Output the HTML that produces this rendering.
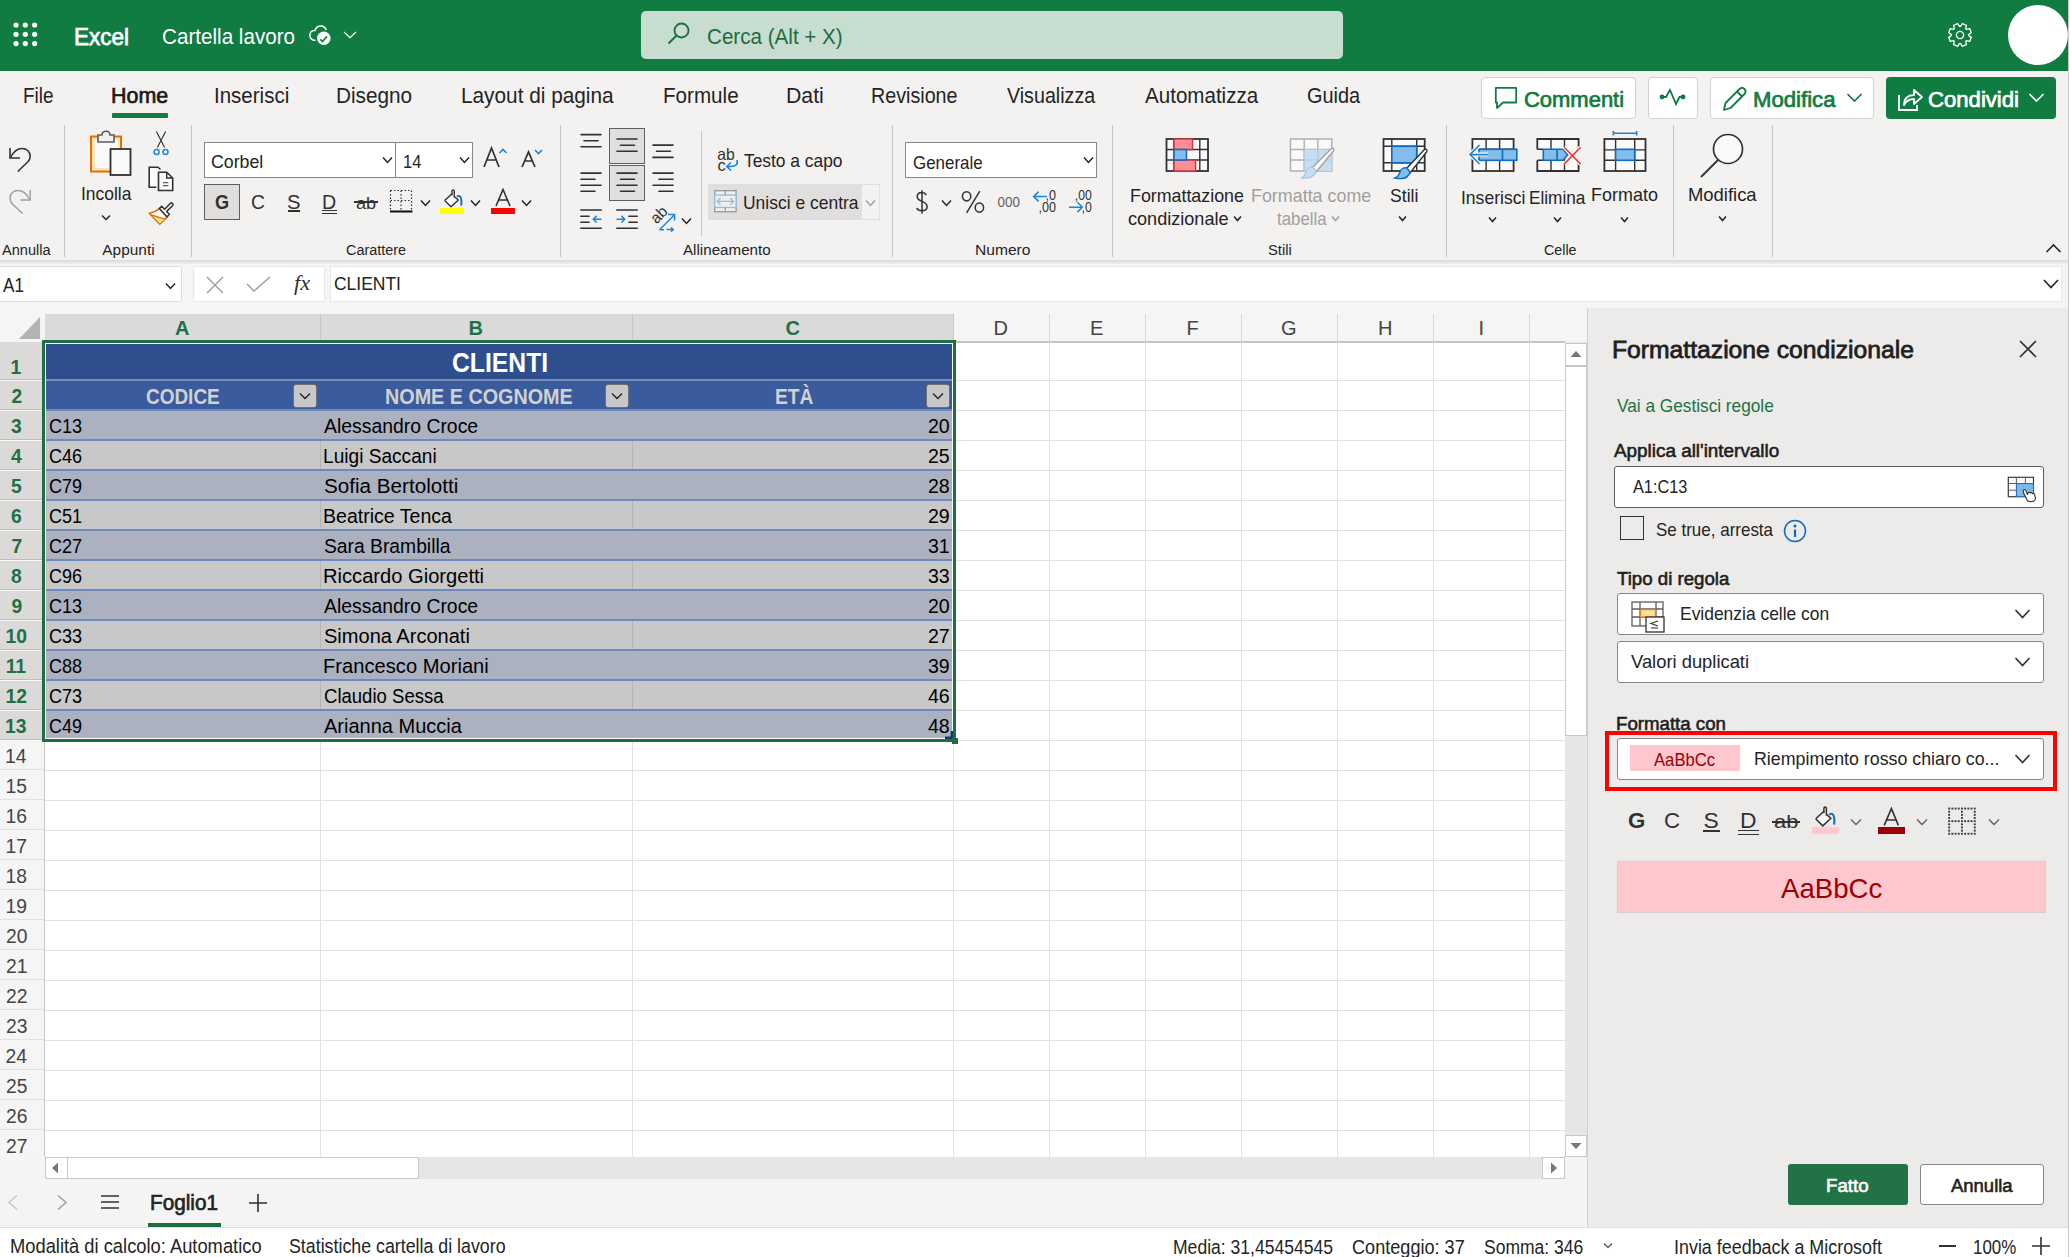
<!DOCTYPE html><html><head><meta charset="utf-8"><style>
html,body{margin:0;padding:0;width:2070px;height:1257px;overflow:hidden;background:#fff;position:relative}
body>div,body>svg,body>span{position:absolute;display:block}
.t{white-space:nowrap;line-height:1;font-family:"Liberation Sans",sans-serif;transform-origin:0 0}
</style></head><body>
<div style="left:0px;top:0px;width:2070px;height:71px;background:#107C41"></div>
<svg style="left:13px;top:22px;" width="26" height="26" viewBox="0 0 26 26"><circle cx="3.0" cy="3.0" r="2.6" fill="#fff"/><circle cx="3.0" cy="12.3" r="2.6" fill="#fff"/><circle cx="3.0" cy="21.6" r="2.6" fill="#fff"/><circle cx="12.3" cy="3.0" r="2.6" fill="#fff"/><circle cx="12.3" cy="12.3" r="2.6" fill="#fff"/><circle cx="12.3" cy="21.6" r="2.6" fill="#fff"/><circle cx="21.6" cy="3.0" r="2.6" fill="#fff"/><circle cx="21.6" cy="12.3" r="2.6" fill="#fff"/><circle cx="21.6" cy="21.6" r="2.6" fill="#fff"/></svg>
<span class="t" style="transform:scaleX(0.9624);left:74.0px;top:25.5px;font-size:23.43px;color:#fff;font-weight:400;-webkit-text-stroke:0.75px #fff;">Excel</span>
<span class="t" style="transform:scaleX(0.9444);left:162.1px;top:26.4px;font-size:21.86px;color:#fff;font-weight:400;">Cartella lavoro</span>
<svg style="left:305px;top:22px;" width="30" height="28" viewBox="0 0 30 28"><path d="M10.5 18.5 C6 18.5 4.6 15 4.9 12.6 C5.3 9.8 7.6 8.3 10 8.5 C11 5.4 13.3 4 15.8 4 C18.3 4 20.3 5.6 21.2 8" fill="none" stroke="#fff" stroke-width="1.5"/><circle cx="18.8" cy="16.3" r="6.7" fill="#fff"/><path d="M15.3 17.3 L17.5 19.6 L22 14.3" fill="none" stroke="#107C41" stroke-width="1.7"/></svg>
<svg style="left:343px;top:30px;" width="14" height="10" viewBox="0 0 14 10"><path d="M1 2 L7 7.7 L13 2" fill="none" stroke="#fff" stroke-width="1.2"/></svg>
<div style="left:641px;top:11px;width:702px;height:48px;background:#C6DDD0;border-radius:5px"></div>
<svg style="left:666px;top:21px;" width="26" height="26" viewBox="0 0 26 26"><circle cx="15.5" cy="9.5" r="7" fill="none" stroke="#1F6B42" stroke-width="1.8"/><path d="M10.5 14.5 L2.5 22.5" stroke="#1F6B42" stroke-width="2"/></svg>
<span class="t" style="transform:scaleX(0.9315);left:707.1px;top:25.5px;font-size:22.14px;color:#1F6B42;font-weight:400;">Cerca (Alt + X)</span>
<svg style="left:1947px;top:22px;" width="26" height="26" viewBox="0 0 26 26"><g transform="translate(13,13)"><polygon points="11.36,2.34 9.69,6.38 6.45,5.69 5.69,6.45 6.38,9.69 2.34,11.36 0.54,8.58 -0.54,8.58 -2.34,11.36 -6.38,9.69 -5.69,6.45 -6.45,5.69 -9.69,6.38 -11.36,2.34 -8.58,0.54 -8.58,-0.54 -11.36,-2.34 -9.69,-6.38 -6.45,-5.69 -5.69,-6.45 -6.38,-9.69 -2.34,-11.36 -0.54,-8.58 0.54,-8.58 2.34,-11.36 6.38,-9.69 5.69,-6.45 6.45,-5.69 9.69,-6.38 11.36,-2.34 8.58,-0.54 8.58,0.54" fill="none" stroke="#fff" stroke-width="1.3" stroke-linejoin="round"/><circle r="3.6" fill="none" stroke="#fff" stroke-width="1.4"/></g></svg>
<div style="left:2008px;top:5px;width:60px;height:60px;background:#fff;border-radius:50%"></div>
<div style="left:2068px;top:0px;width:2px;height:1257px;background:#fff"></div>
<div style="left:0px;top:71px;width:2068px;height:189px;background:#F3F2F1"></div>
<span class="t" style="transform:scaleX(0.8660);left:23.1px;top:85.4px;font-size:21.86px;color:#242424;font-weight:400;">File</span>
<span class="t" style="transform:scaleX(0.9798);left:111.0px;top:85.4px;font-size:21.86px;color:#1B1A19;font-weight:400;-webkit-text-stroke:0.70px #1B1A19;">Home</span>
<span class="t" style="transform:scaleX(0.9378);left:214.1px;top:85.4px;font-size:21.86px;color:#242424;font-weight:400;">Inserisci</span>
<span class="t" style="transform:scaleX(0.9488);left:336.1px;top:85.4px;font-size:21.86px;color:#242424;font-weight:400;">Disegno</span>
<span class="t" style="transform:scaleX(0.9509);left:460.6px;top:85.4px;font-size:21.86px;color:#242424;font-weight:400;">Layout di pagina</span>
<span class="t" style="transform:scaleX(0.9429);left:663.1px;top:85.4px;font-size:21.86px;color:#242424;font-weight:400;">Formule</span>
<span class="t" style="transform:scaleX(0.9725);left:786.0px;top:85.4px;font-size:21.86px;color:#242424;font-weight:400;">Dati</span>
<span class="t" style="transform:scaleX(0.9016);left:871.1px;top:85.4px;font-size:21.86px;color:#242424;font-weight:400;">Revisione</span>
<span class="t" style="transform:scaleX(0.8993);left:1006.6px;top:85.4px;font-size:21.86px;color:#242424;font-weight:400;">Visualizza</span>
<span class="t" style="transform:scaleX(0.9412);left:1145.0px;top:85.4px;font-size:21.86px;color:#242424;font-weight:400;">Automatizza</span>
<span class="t" style="transform:scaleX(0.9111);left:1307.1px;top:85.4px;font-size:21.86px;color:#242424;font-weight:400;">Guida</span>
<div style="left:112px;top:113px;width:56px;height:5px;background:#107C41;border-radius:1px"></div>
<div style="left:1481px;top:77px;width:155px;height:42px;background:#fff;border:1px solid #D1D1D1;border-radius:4px;box-sizing:border-box"></div>
<svg style="left:1493px;top:85px;" width="26" height="26" viewBox="0 0 26 26"><path d="M2.8 2.8 H23.2 V17.5 H10 L4 23 V17.5 H2.8 Z" fill="none" stroke="#107C41" stroke-width="1.8" stroke-linejoin="round"/></svg>
<span class="t" style="transform:scaleX(0.9674);left:1523.6px;top:88.4px;font-size:22.71px;color:#107C41;font-weight:400;-webkit-text-stroke:0.73px #107C41;">Commenti</span>
<div style="left:1648px;top:77px;width:50px;height:42px;background:#fff;border:1px solid #D1D1D1;border-radius:4px;box-sizing:border-box"></div>
<svg style="left:1659px;top:86px;" width="28" height="24" viewBox="0 0 28 24"><path d="M3 11 L7 11 L11 4 L17 18 L20.5 11 L25 11" fill="none" stroke="#107C41" stroke-width="1.8"/><circle cx="3" cy="11" r="2.4" fill="#107C41"/><circle cx="24" cy="11" r="2.4" fill="#107C41"/></svg>
<div style="left:1710px;top:77px;width:164px;height:42px;background:#fff;border:1px solid #D1D1D1;border-radius:4px;box-sizing:border-box"></div>
<svg style="left:1721px;top:85px;" width="28" height="28" viewBox="0 0 28 28"><path d="M3 25 L4.5 18 L18.5 4 C20 2.5 22 2.5 23.5 4 C25 5.5 25 7.5 23.5 9 L9.5 23 Z M16 6.5 L21 11.5" fill="none" stroke="#107C41" stroke-width="1.8" stroke-linejoin="round"/></svg>
<span class="t" style="transform:scaleX(0.9760);left:1753.4px;top:88.4px;font-size:22.71px;color:#107C41;font-weight:400;-webkit-text-stroke:0.73px #107C41;">Modifica</span>
<svg style="left:1846px;top:92px;" width="17" height="12" viewBox="0 0 17 12"><path d="M1.5 2 L8.5 9 L15.5 2" fill="none" stroke="#107C41" stroke-width="1.7"/></svg>
<div style="left:1886px;top:77px;width:170px;height:42px;background:#107C41;border-radius:4px"></div>
<svg style="left:1897px;top:86px;" width="27" height="26" viewBox="0 0 27 26"><path d="M2 9 V24 H20 V19" fill="none" stroke="#fff" stroke-width="1.8"/><path d="M7 19 C7 12 11 9 17 9 V4 L25 11 L17 18 V13 C12 13 9 15 7 19 Z" fill="none" stroke="#fff" stroke-width="1.8" stroke-linejoin="round"/></svg>
<span class="t" style="transform:scaleX(0.9744);left:1928.2px;top:88.4px;font-size:22.71px;color:#fff;font-weight:400;-webkit-text-stroke:0.73px #fff;">Condividi</span>
<svg style="left:2028px;top:92px;" width="17" height="12" viewBox="0 0 17 12"><path d="M1.5 2 L8.5 9 L15.5 2" fill="none" stroke="#fff" stroke-width="1.7"/></svg>
<div style="left:64px;top:125px;width:1px;height:132px;background:#C8C6C4"></div>
<div style="left:191px;top:125px;width:1px;height:132px;background:#C8C6C4"></div>
<div style="left:560px;top:125px;width:1px;height:132px;background:#C8C6C4"></div>
<div style="left:892px;top:125px;width:1px;height:132px;background:#C8C6C4"></div>
<div style="left:1112px;top:125px;width:1px;height:132px;background:#C8C6C4"></div>
<div style="left:1446px;top:125px;width:1px;height:132px;background:#C8C6C4"></div>
<div style="left:1673px;top:125px;width:1px;height:132px;background:#C8C6C4"></div>
<div style="left:1772px;top:125px;width:1px;height:132px;background:#C8C6C4"></div>
<div style="left:701px;top:131px;width:1px;height:105px;background:#C8C6C4"></div>
<span class="t" style="transform:scaleX(0.9466);left:2.3px;top:242.1px;font-size:15.43px;color:#242424;font-weight:400;">Annulla</span>
<span class="t" style="left:102.3px;top:242.1px;font-size:15.43px;color:#242424;font-weight:400;">Appunti</span>
<span class="t" style="transform:scaleX(0.9339);left:346.3px;top:242.1px;font-size:15.43px;color:#242424;font-weight:400;">Carattere</span>
<span class="t" style="transform:scaleX(0.9833);left:683.1px;top:242.1px;font-size:15.43px;color:#242424;font-weight:400;">Allineamento</span>
<span class="t" style="transform:scaleX(1.0118);left:975.1px;top:242.1px;font-size:15.43px;color:#242424;font-weight:400;">Numero</span>
<span class="t" style="transform:scaleX(0.9540);left:1267.7px;top:242.1px;font-size:15.43px;color:#242424;font-weight:400;">Stili</span>
<span class="t" style="transform:scaleX(0.9257);left:1544.0px;top:242.1px;font-size:15.43px;color:#242424;font-weight:400;">Celle</span>
<svg style="left:2045px;top:242px;" width="17" height="12" viewBox="0 0 17 12"><path d="M1.5 10 L8.5 3 L15.5 10" fill="none" stroke="#242424" stroke-width="1.6"/></svg>
<div style="left:0px;top:260px;width:2068px;height:4px;background:linear-gradient(#D9D8D7,#F0F0F0)"></div>
<svg style="left:8px;top:146px;" width="26" height="28" viewBox="0 0 26 28"><path d="M2 2 V12 H12" fill="none" stroke="#323130" stroke-width="1.6"/><path d="M2.5 11.5 C6 4.5 10.5 2.5 14.3 2.5 C18.8 2.5 22.2 6 22.2 10 C22.2 12.5 21.2 14.5 19.7 16 L9.7 25.5" fill="none" stroke="#323130" stroke-width="1.6"/></svg>
<svg style="left:8px;top:189px;" width="26" height="28" viewBox="0 0 26 28"><path d="M22.2 1 V11 H12.3" fill="none" stroke="#A19F9D" stroke-width="1.5"/><path d="M21.7 10.5 C18.2 3.5 13.7 1.5 9.9 1.5 C5.4 1.5 2 5 2 9 C2 11.5 3 13.5 4.5 15 L14.5 24.5" fill="none" stroke="#A19F9D" stroke-width="1.5"/></svg>
<svg style="left:88px;top:128px;" width="46" height="50" viewBox="0 0 46 50"><rect x="3" y="8.5" width="30" height="35" fill="#FCE4B8" stroke="#E07000" stroke-width="2"/><rect x="7" y="12" width="23" height="28" fill="#FAFAFA"/><path d="M10 14 V7 H14 C14 2 22 2 22 7 H26 V14 Z" fill="#F0F0F0" stroke="#605E5C" stroke-width="1.6"/><rect x="22.5" y="21" width="20" height="26" fill="#FAFAFA" stroke="#323130" stroke-width="1.8"/></svg>
<span class="t" style="transform:scaleX(0.9394);left:81.4px;top:185.2px;font-size:18.57px;color:#242424;font-weight:400;">Incolla</span>
<svg style="left:101px;top:214px;" width="10" height="8" viewBox="0 0 10 8"><path d="M1 1.5 L5 5.5 L9 1.5" fill="none" stroke="#242424" stroke-width="1.5"/></svg>
<svg style="left:151px;top:130px;" width="20" height="27" viewBox="0 0 20 27"><path d="M5.4 1.5 L13.6 17.6 M14.6 1.5 L6.4 17.6" stroke="#323130" stroke-width="1.15"/><circle cx="5.6" cy="22" r="2.5" fill="#fff" stroke="#1A86D9" stroke-width="1.5"/><circle cx="14.5" cy="22" r="2.5" fill="#fff" stroke="#1A86D9" stroke-width="1.5"/></svg>
<svg style="left:148px;top:165px;" width="27" height="28" viewBox="0 0 27 28"><path d="M8.3 22.2 H1.2 V2.2 H10 L12.5 4.5" fill="#FAFAFA" stroke="#323130" stroke-width="1.6"/><path d="M10.5 7.2 H18.7 L24.7 13 V25.5 H10.5 Z" fill="#FAFAFA" stroke="#323130" stroke-width="1.6" stroke-linejoin="miter"/><path d="M18.7 7.2 V13 H24.7" fill="none" stroke="#323130" stroke-width="1.4"/><path d="M15 17.6 H20.3 M15 20.6 H20.3" stroke="#605E5C" stroke-width="1.2"/></svg>
<svg style="left:145px;top:198px;" width="32" height="32" viewBox="0 0 32 32"><path d="M14.3 10.6 C11 13.5 7.5 14.8 4.3 15.3 L14.8 26.2 L22.2 18.9 Z" fill="#FAFAFA" stroke="#E07000" stroke-width="1.5" stroke-linejoin="round"/><path d="M7.8 17.6 L20.2 21 L14.8 25.3 Z" fill="#FBDD8E"/><path d="M6 16.9 L20.6 21.3" stroke="#E07000" stroke-width="1.4"/><path d="M14.3 10.6 L16.6 8.3 L19.6 11.2 L25.5 5.3 C26 4.8 26.8 4.8 27.3 5.3 L27.7 5.8 C28.2 6.3 28.2 7 27.7 7.5 L21.7 13.4 L24.3 16.2 L22.2 18.9 Z" fill="#FAFAFA" stroke="#323130" stroke-width="1.5" stroke-linejoin="round"/></svg>
<div style="left:204px;top:142px;width:192px;height:36px;background:#fff;border:1px solid #8A8886;box-sizing:border-box"></div>
<div style="left:395px;top:142px;width:78px;height:36px;background:#fff;border:1px solid #8A8886;box-sizing:border-box"></div>
<span class="t" style="transform:scaleX(0.9560);left:211.3px;top:153.2px;font-size:18.57px;color:#242424;font-weight:400;">Corbel</span>
<span class="t" style="transform:scaleX(0.8849);left:402.8px;top:152.9px;font-size:18.57px;color:#242424;font-weight:400;">14</span>
<svg style="left:382px;top:156px;" width="11" height="9" viewBox="0 0 11 9"><path d="M1 1.5 L5.5 6.5 L10 1.5" fill="none" stroke="#242424" stroke-width="1.5"/></svg>
<svg style="left:459px;top:156px;" width="11" height="9" viewBox="0 0 11 9"><path d="M1 1.5 L5.5 6.5 L10 1.5" fill="none" stroke="#242424" stroke-width="1.5"/></svg>
<svg style="left:482px;top:146px;" width="26" height="24" viewBox="0 0 26 24"><path d="M2 21 L9.5 2 L17 21 M5 14 H14" fill="none" stroke="#323130" stroke-width="1.7"/><path d="M17.5 7 L21 3.5 L24.5 7" fill="none" stroke="#1A86D9" stroke-width="1.6"/></svg>
<svg style="left:520px;top:147px;" width="26" height="23" viewBox="0 0 26 23"><path d="M2 20 L8.5 5 L15 20 M4.5 14 H12.5" fill="none" stroke="#323130" stroke-width="1.7"/><path d="M15 3 L18.5 6.5 L22 3" fill="none" stroke="#1A86D9" stroke-width="1.6"/></svg>
<div style="left:204px;top:184px;width:36px;height:36px;background:#E1DFDD;border:1px solid #605E5C;box-sizing:border-box"></div>
<span class="t" style="transform:scaleX(0.8933);left:214.9px;top:191.5px;font-size:20.29px;color:#323130;font-weight:700;">G</span>
<span class="t" style="transform:scaleX(0.9538);left:250.6px;top:191.5px;font-size:20.29px;color:#323130;font-weight:400;">C</span>
<span class="t" style="left:287.0px;top:191.5px;font-size:20.29px;color:#323130;font-weight:400;">S</span>
<div style="left:288px;top:210px;width:12px;height:1.5px;background:#323130"></div>
<span class="t" style="transform:scaleX(0.9692);left:322.4px;top:191.5px;font-size:20.29px;color:#323130;font-weight:400;">D</span>
<div style="left:322px;top:210px;width:15px;height:1.3px;background:#323130"></div>
<div style="left:322px;top:213px;width:15px;height:1.3px;background:#323130"></div>
<span class="t" style="transform:scaleX(1.1030);left:356.0px;top:194.5px;font-size:16.43px;color:#323130;font-weight:400;">ab</span>
<div style="left:354px;top:201px;width:24px;height:1.5px;background:#323130"></div>
<svg style="left:389px;top:189px;" width="25" height="25" viewBox="0 0 25 25"><path d="M1.5 1.5 H22.5 V21 M1.5 1.5 V21 M1.5 11.5 H22.5 M12 1.5 V21" fill="none" stroke="#323130" stroke-width="1.2" stroke-dasharray="1.5 2"/><rect x="1" y="21.5" width="22.5" height="2" fill="#111"/></svg>
<svg style="left:420px;top:199px;" width="11" height="9" viewBox="0 0 11 9"><path d="M1 1.5 L5.5 6.5 L10 1.5" fill="none" stroke="#242424" stroke-width="1.5"/></svg>
<svg style="left:439px;top:188px;" width="27" height="27" viewBox="0 0 27 27"><g transform="translate(0.5,0) scale(0.9)"><path d="M5.7 13.8 L12.8 20.9 L20.9 13.3 L16.4 9.4 M5.7 13.8 L13.9 6.3" fill="#FAFAFA" stroke="#323130" stroke-width="1.5" stroke-linejoin="round"/><path d="M13.9 8 V3.2 C13.9 1.6 16.4 1.6 16.4 3.2 V10.5" fill="none" stroke="#323130" stroke-width="1.5"/><path d="M19.3 9.6 C22.4 7.4 25.2 9.5 24.2 19.6" fill="none" stroke="#0F6CBD" stroke-width="2.1"/></g><rect x="1" y="20" width="24" height="6" fill="#FFFF00"/></svg>
<svg style="left:470px;top:199px;" width="11" height="9" viewBox="0 0 11 9"><path d="M1 1.5 L5.5 6.5 L10 1.5" fill="none" stroke="#242424" stroke-width="1.5"/></svg>
<svg style="left:490px;top:188px;" width="26" height="27" viewBox="0 0 26 27"><path d="M6 18 L13 1.5 L20 18 M8.5 12 H17.5" fill="none" stroke="#323130" stroke-width="1.6"/><rect x="1" y="20" width="24" height="6" fill="#FF0000"/></svg>
<svg style="left:521px;top:199px;" width="11" height="9" viewBox="0 0 11 9"><path d="M1 1.5 L5.5 6.5 L10 1.5" fill="none" stroke="#242424" stroke-width="1.5"/></svg>
<div style="left:609px;top:128px;width:36px;height:36px;background:#E1DFDD;border:1px solid #605E5C;box-sizing:border-box"></div>
<div style="left:609px;top:165px;width:36px;height:36px;background:#E1DFDD;border:1px solid #605E5C;box-sizing:border-box"></div>
<svg style="left:560px;top:125px;" width="130" height="110" viewBox="0 0 130 110"><path d="M21 9.6 H41" stroke="#323130" stroke-width="1.6" stroke-linecap="round"/><path d="M24 15.8 H38" stroke="#323130" stroke-width="1.6" stroke-linecap="round"/><path d="M21 21.7 H41" stroke="#323130" stroke-width="1.6" stroke-linecap="round"/></svg>
<svg style="left:560px;top:125px;" width="130" height="110" viewBox="0 0 130 110"><path d="M57 14 H77" stroke="#323130" stroke-width="1.6" stroke-linecap="round"/><path d="M60.5 20.3 H74.5" stroke="#323130" stroke-width="1.6" stroke-linecap="round"/><path d="M57 26.2 H77" stroke="#323130" stroke-width="1.6" stroke-linecap="round"/></svg>
<svg style="left:560px;top:125px;" width="130" height="110" viewBox="0 0 130 110"><path d="M93 20.1 H113" stroke="#323130" stroke-width="1.6" stroke-linecap="round"/><path d="M96.5 26.2 H110.5" stroke="#323130" stroke-width="1.6" stroke-linecap="round"/><path d="M93 32.4 H113" stroke="#323130" stroke-width="1.6" stroke-linecap="round"/></svg>
<svg style="left:560px;top:125px;" width="130" height="110" viewBox="0 0 130 110"><path d="M21 48.1 H41" stroke="#323130" stroke-width="1.6" stroke-linecap="round"/><path d="M21 54.3 H35" stroke="#323130" stroke-width="1.6" stroke-linecap="round"/><path d="M21 60.2 H41" stroke="#323130" stroke-width="1.6" stroke-linecap="round"/><path d="M21 66.3 H35" stroke="#323130" stroke-width="1.6" stroke-linecap="round"/></svg>
<svg style="left:560px;top:125px;" width="130" height="110" viewBox="0 0 130 110"><path d="M57 48.1 H77" stroke="#323130" stroke-width="1.6" stroke-linecap="round"/><path d="M60.5 54.3 H74.5" stroke="#323130" stroke-width="1.6" stroke-linecap="round"/><path d="M57 60.2 H77" stroke="#323130" stroke-width="1.6" stroke-linecap="round"/><path d="M60.5 66.3 H74.5" stroke="#323130" stroke-width="1.6" stroke-linecap="round"/></svg>
<svg style="left:560px;top:125px;" width="130" height="110" viewBox="0 0 130 110"><path d="M93 48.1 H113" stroke="#323130" stroke-width="1.6" stroke-linecap="round"/><path d="M99 54.3 H113" stroke="#323130" stroke-width="1.6" stroke-linecap="round"/><path d="M93 60.2 H113" stroke="#323130" stroke-width="1.6" stroke-linecap="round"/><path d="M99 66.3 H113" stroke="#323130" stroke-width="1.6" stroke-linecap="round"/></svg>
<svg style="left:570px;top:200px;" width="130" height="36" viewBox="0 0 130 36"><g stroke="#323130" stroke-width="1.6" stroke-linecap="round"><path d="M10.8 10 H31.2 M10.8 16.3 H19 M10.8 22.2 H19 M10.8 28.3 H31.2"/><path d="M46.8 10 H67.2 M58.9 16.3 H67.2 M58.9 22.2 H67.2 M46.8 28.3 H67.2"/></g><path d="M31.5 19.2 H23.5 M26.6 15.9 L23.3 19.2 L26.6 22.5" fill="none" stroke="#1A86D9" stroke-width="1.5"/><path d="M46.5 19.2 H54.5 M51.4 15.9 L54.7 19.2 L51.4 22.5" fill="none" stroke="#1A86D9" stroke-width="1.5"/><text transform="translate(86.5,24.5) rotate(-45)" font-family="Liberation Sans" font-size="15.5" fill="#323130">ab</text><path d="M89.5 29.8 L104.3 15 M98 14.4 H104.6 V20.5 M89.5 29.8 H94 M96.5 29.6 H103 M101 27.5 L103.3 29.6 L101 31.7" fill="none" stroke="#1A86D9" stroke-width="1.5"/></svg>
<svg style="left:681px;top:217px;" width="11" height="9" viewBox="0 0 11 9"><path d="M1 1.5 L5.5 6.5 L10 1.5" fill="none" stroke="#242424" stroke-width="1.5"/></svg>
<svg style="left:710px;top:140px;" width="40" height="40" viewBox="0 0 40 40"><text x="7.3" y="19.7" font-family="Liberation Sans" font-size="16.5" fill="#323130" textLength="17.5" lengthAdjust="spacingAndGlyphs">ab</text><text x="7.5" y="30.6" font-family="Liberation Sans" font-size="16.5" fill="#323130">c</text><path d="M26.8 20 C28.5 24 26 26.5 21 26.5 H16.8 M21 22.5 L16.8 26.5 L21 30.5" fill="none" stroke="#1A86D9" stroke-width="1.6"/></svg>
<span class="t" style="transform:scaleX(0.9206);left:744.0px;top:151.9px;font-size:18.86px;color:#242424;font-weight:400;">Testo a capo</span>
<div style="left:708px;top:184px;width:154px;height:36px;background:#E1DFDD"></div>
<div style="left:861px;top:184px;width:19px;height:36px;background:#F3F2F1;border:1px solid #E1DFDD;box-sizing:border-box"></div>
<svg style="left:705px;top:184px;" width="40" height="36" viewBox="0 0 40 36"><rect x="9.7" y="6.7" width="21.4" height="21" fill="#F3F2F1" stroke="#9A9896" stroke-width="1.3"/><path d="M20.2 6.7 V27.7" stroke="#9A9896" stroke-width="1.3"/><rect x="9.7" y="11" width="21.4" height="12.5" fill="#F0EFEE" stroke="#92BFDD" stroke-width="1.4"/><path d="M12.5 17.4 H28.3 M15.5 14 L12.3 17.4 L15.5 20.8 M25.3 14 L28.5 17.4 L25.3 20.8" fill="none" stroke="#92BFDD" stroke-width="1.4"/></svg>
<span class="t" style="transform:scaleX(0.9779);left:743.3px;top:194.5px;font-size:17.86px;color:#242424;font-weight:400;">Unisci e centra</span>
<svg style="left:865px;top:199px;" width="11" height="9" viewBox="0 0 11 9"><path d="M1 1.5 L5.5 6.5 L10 1.5" fill="none" stroke="#A19F9D" stroke-width="1.5"/></svg>
<div style="left:905px;top:142px;width:192px;height:36px;background:#fff;border:1px solid #8A8886;box-sizing:border-box"></div>
<span class="t" style="transform:scaleX(0.9127);left:912.8px;top:153.5px;font-size:18.57px;color:#242424;font-weight:400;">Generale</span>
<svg style="left:1083px;top:156px;" width="11" height="9" viewBox="0 0 11 9"><path d="M1 1.5 L5.5 6.5 L10 1.5" fill="none" stroke="#242424" stroke-width="1.5"/></svg>
<svg style="left:914px;top:189px;" width="16" height="26" viewBox="0 0 16 26"><path d="M12.3 6 C11.3 4.3 9.6 3.6 7.8 3.6 C4.9 3.6 3.2 5.4 3.2 7.8 C3.2 13.3 13.1 11.5 13.1 17.5 C13.1 20.1 11.1 21.8 7.8 21.8 C5.3 21.8 3.5 20.8 2.7 19 M8 1.2 V24.8" fill="none" stroke="#323130" stroke-width="1.5"/></svg>
<svg style="left:941px;top:199px;" width="11" height="9" viewBox="0 0 11 9"><path d="M1 1.5 L5.5 6.5 L10 1.5" fill="none" stroke="#242424" stroke-width="1.5"/></svg>
<svg style="left:960px;top:189px;" width="26" height="26" viewBox="0 0 26 26"><ellipse cx="6.6" cy="7.3" rx="4.2" ry="4.6" fill="none" stroke="#323130" stroke-width="1.5"/><ellipse cx="19.4" cy="18.6" rx="4.2" ry="4.6" fill="none" stroke="#323130" stroke-width="1.5"/><path d="M19.8 2.2 L6.6 23.8" stroke="#323130" stroke-width="1.5"/></svg>
<svg style="left:996px;top:193px;" width="26" height="16" viewBox="0 0 26 16"><text x="1.6" y="13.7" font-family="Liberation Sans" font-size="15" fill="#605E5C" textLength="22.4" lengthAdjust="spacingAndGlyphs">000</text></svg>
<svg style="left:1031px;top:188px;" width="28" height="27" viewBox="0 0 28 27"><text x="14.5" y="12.1" font-family="Liberation Sans" font-size="14" fill="#323130" textLength="10.5" lengthAdjust="spacingAndGlyphs">,0</text><text x="7.5" y="24.4" font-family="Liberation Sans" font-size="14" fill="#323130" textLength="17.5" lengthAdjust="spacingAndGlyphs">,00</text><path d="M16 8.5 H3 M7.6 3.6 L2.7 8.5 L7.6 13.4" fill="none" stroke="#1A86D9" stroke-width="1.5"/></svg>
<svg style="left:1066px;top:188px;" width="28" height="27" viewBox="0 0 28 27"><text x="8.8" y="12.1" font-family="Liberation Sans" font-size="14" fill="#323130" textLength="17" lengthAdjust="spacingAndGlyphs">,00</text><text x="15.5" y="24.4" font-family="Liberation Sans" font-size="14" fill="#323130" textLength="10.3" lengthAdjust="spacingAndGlyphs">,0</text><path d="M3 19.2 H16 M11.4 14.3 L16.3 19.2 L11.4 24.1" fill="none" stroke="#1A86D9" stroke-width="1.5"/></svg>
<svg style="left:1160px;top:130px;" width="56" height="50" viewBox="0 0 56 50"><rect x="6.5" y="9" width="41.5" height="32" fill="#FAFAFA" stroke="#323130" stroke-width="1.8"/><path d="M6.5 19.5 H48 M6.5 30 H48 M14 9 V41 M39.8 9 V41" stroke="#323130" stroke-width="1.4"/><rect x="14" y="9" width="18.5" height="10.5" fill="#FF8F96" stroke="#D13438" stroke-width="1.5"/><rect x="14" y="30" width="21.6" height="11" fill="#FF8F96" stroke="#D13438" stroke-width="1.5"/><rect x="14" y="19.5" width="12.5" height="10.5" fill="#83BDEB" stroke="#0F6CBD" stroke-width="1.5"/></svg>
<span class="t" style="transform:scaleX(0.9598);left:1129.7px;top:186.9px;font-size:18.57px;color:#242424;font-weight:400;">Formattazione</span>
<span class="t" style="transform:scaleX(0.9740);left:1128.3px;top:210.2px;font-size:18.57px;color:#242424;font-weight:400;">condizionale</span>
<svg style="left:1233px;top:215px;" width="9" height="8" viewBox="0 0 9 8"><path d="M1 1.5 L4.5 5.5 L8 1.5" fill="none" stroke="#242424" stroke-width="1.5"/></svg>
<svg style="left:1285px;top:130px;" width="56" height="54" viewBox="0 0 56 54"><rect x="5.5" y="9" width="41.3" height="32" fill="#FAFAFA" stroke="#B3B0AD" stroke-width="1.5"/><path d="M5.5 19.5 H46.8 M5.5 30 H46.8 M19.2 9 V41 M32.8 9 V41" stroke="#B3B0AD" stroke-width="1.4"/><rect x="19.2" y="19.5" width="27.6" height="21.5" fill="#C7DDF2"/><path d="M19.2 19.5 V41 M32.8 19.5 V41 M19.2 30 H46.8" stroke="#A9C9E8" stroke-width="1.2"/><path d="M27 38 L46 19 C48 17 50 19 48.5 21 L31 42 Z" fill="#FAFAFA" stroke="#A19F9D" stroke-width="1.3" stroke-linejoin="round"/><path d="M16 48 C19 47 20 45 21 42 C22 39 25 37 28 37.5 L31 41 C30 45 26 49 16 48 Z" fill="#C7DDF2" stroke="#A9C9E8" stroke-width="1.3"/></svg>
<span class="t" style="transform:scaleX(0.9636);left:1250.7px;top:186.9px;font-size:18.57px;color:#A19F9D;font-weight:400;">Formatta come</span>
<span class="t" style="transform:scaleX(0.9083);left:1276.7px;top:210.2px;font-size:18.57px;color:#A19F9D;font-weight:400;">tabella</span>
<svg style="left:1331px;top:215px;" width="9" height="8" viewBox="0 0 9 8"><path d="M1 1.5 L4.5 5.5 L8 1.5" fill="none" stroke="#A19F9D" stroke-width="1.5"/></svg>
<svg style="left:1378px;top:130px;" width="56" height="54" viewBox="0 0 56 54"><rect x="5.5" y="9" width="41.2" height="32" fill="#FAFAFA" stroke="#323130" stroke-width="1.8"/><path d="M5.5 16.3 H46.7 M5.5 32.8 H46.7 M13.8 9 V41 M38.7 9 V41" stroke="#323130" stroke-width="1.4"/><rect x="13.8" y="16.3" width="24.9" height="16.5" fill="#83BDEB" stroke="#0F6CBD" stroke-width="1.6"/><path d="M28 39 L46 20 C48 18 50 20 48.5 22 L32 43 Z" fill="#FAFAFA" stroke="#323130" stroke-width="1.4" stroke-linejoin="round"/><path d="M17 48 C20 47 21 45 22 42 C23 39 26 37 29 38 L32 42 C31 46 27 50 17 48 Z" fill="#83BDEB" stroke="#0F6CBD" stroke-width="1.4"/></svg>
<span class="t" style="transform:scaleX(0.9484);left:1390.0px;top:186.9px;font-size:18.57px;color:#242424;font-weight:400;">Stili</span>
<svg style="left:1398px;top:215px;" width="9" height="8" viewBox="0 0 9 8"><path d="M1 1.5 L4.5 5.5 L8 1.5" fill="none" stroke="#242424" stroke-width="1.5"/></svg>
<svg style="left:1460px;top:128px;" width="62" height="48" viewBox="0 0 62 48"><rect x="12.4" y="11" width="41.2" height="32" fill="#FAFAFA" stroke="#323130" stroke-width="1.8"/><path d="M12.4 21.3 H53.6 M12.4 32.3 H53.6 M26.1 11 V43 M39.6 11 V43" stroke="#323130" stroke-width="1.4"/><rect x="19" y="21.3" width="37.8" height="11" fill="#83BDEB" stroke="#0F6CBD" stroke-width="1.6"/><path d="M42.5 21.3 V32.3" stroke="#0F6CBD" stroke-width="1.6"/><path d="M10 26.6 H28 M19.6 17 L10 26.6 L19.6 36" fill="none" stroke="#FAFAFA" stroke-width="4"/><path d="M10 26.6 H28 M19.6 17 L10 26.6 L19.6 36" fill="none" stroke="#1A86D9" stroke-width="1.6"/></svg>
<svg style="left:1530px;top:128px;" width="56" height="48" viewBox="0 0 56 48"><path d="M7.3 21.3 V11 H48.6 V21.3 M7.3 32.3 V43 H48.6 V32.3" fill="#FAFAFA" stroke="#323130" stroke-width="1.8"/><path d="M7.3 21.3 H13 M7.3 32.3 H13 M21 11 V43 M34.5 11 V43" fill="none" stroke="#323130" stroke-width="1.4"/><path d="M13.3 21.3 H33 L37.7 26.8 L33 32.3 H13.3 Z" fill="#83BDEB" stroke="#0F6CBD" stroke-width="1.6" stroke-linejoin="round"/><path d="M27.1 21.3 V32.3" stroke="#0F6CBD" stroke-width="1.6"/><path d="M34.2 19.2 L50.6 36.1 M50.6 19.2 L34.2 36.1" stroke="#FAFAFA" stroke-width="4"/><path d="M34.2 19.2 L50.6 36.1 M50.6 19.2 L34.2 36.1" stroke="#E83A3A" stroke-width="1.6"/></svg>
<svg style="left:1598px;top:126px;" width="54" height="50" viewBox="0 0 54 50"><path d="M15.4 7.2 H38.6 M15.4 5 V9.4 M38.6 5 V9.4" stroke="#1A86D9" stroke-width="1.6"/><rect x="6.4" y="13" width="41.1" height="32" fill="#FAFAFA" stroke="#323130" stroke-width="1.8"/><path d="M6.4 23.9 H47.5 M6.4 34.3 H47.5 M17.6 13 V45 M36.7 13 V45" stroke="#323130" stroke-width="1.4"/><rect x="17.6" y="23.3" width="19.1" height="11" fill="#83BDEB" stroke="#0F6CBD" stroke-width="1.6"/></svg>
<span class="t" style="transform:scaleX(0.9446);left:1460.8px;top:188.5px;font-size:18.57px;color:#242424;font-weight:400;">Inserisci</span>
<span class="t" style="transform:scaleX(0.9250);left:1529.1px;top:188.5px;font-size:18.57px;color:#242424;font-weight:400;">Elimina</span>
<span class="t" style="transform:scaleX(0.9692);left:1591.0px;top:186.2px;font-size:18.57px;color:#242424;font-weight:400;">Formato</span>
<svg style="left:1488px;top:216px;" width="9" height="8" viewBox="0 0 9 8"><path d="M1 1.5 L4.5 5.5 L8 1.5" fill="none" stroke="#242424" stroke-width="1.5"/></svg>
<svg style="left:1553px;top:216px;" width="9" height="8" viewBox="0 0 9 8"><path d="M1 1.5 L4.5 5.5 L8 1.5" fill="none" stroke="#242424" stroke-width="1.5"/></svg>
<svg style="left:1620px;top:216px;" width="9" height="8" viewBox="0 0 9 8"><path d="M1 1.5 L4.5 5.5 L8 1.5" fill="none" stroke="#242424" stroke-width="1.5"/></svg>
<svg style="left:1698px;top:133px;" width="48" height="46" viewBox="0 0 48 46"><circle cx="30" cy="16" r="14.5" fill="#FAFAFA" stroke="#323130" stroke-width="1.7"/><path d="M20 27 L3 44" stroke="#323130" stroke-width="1.8"/></svg>
<span class="t" style="transform:scaleX(0.9928);left:1688.0px;top:186.2px;font-size:18.57px;color:#242424;font-weight:400;">Modifica</span>
<svg style="left:1718px;top:215px;" width="9" height="8" viewBox="0 0 9 8"><path d="M1 1.5 L4.5 5.5 L8 1.5" fill="none" stroke="#242424" stroke-width="1.5"/></svg>
<div style="left:0px;top:264px;width:2068px;height:50px;background:#F5F5F5"></div>
<div style="left:0px;top:266px;width:182px;height:36px;background:#fff;border:1px solid #E1DFDD;border-left:none;box-sizing:border-box"></div>
<span class="t" style="transform:scaleX(0.8880);left:2.7px;top:276.1px;font-size:19.29px;color:#242424;font-weight:400;">A1</span>
<svg style="left:165px;top:282px;" width="11" height="9" viewBox="0 0 11 9"><path d="M1 1.5 L5.5 6.5 L10 1.5" fill="none" stroke="#242424" stroke-width="1.5"/></svg>
<div style="left:193px;top:266px;width:132px;height:36px;background:#fff;border:1px solid #E9E8E7;box-sizing:border-box"></div>
<svg style="left:205px;top:275px;" width="20" height="20" viewBox="0 0 20 20"><path d="M2 2 L18 18 M18 2 L2 18" stroke="#A19F9D" stroke-width="1.5"/></svg>
<svg style="left:245px;top:275px;" width="28" height="18" viewBox="0 0 28 18"><path d="M2 9 L9 16 L25 2" fill="none" stroke="#A19F9D" stroke-width="1.5"/></svg>
<span class="t" style="transform:scaleX(1.0792);left:294.0px;top:273.4px;font-size:20.71px;color:#323130;font-weight:400;font-family:'Liberation Serif';font-style:italic;">fx</span>
<div style="left:330px;top:266px;width:1732px;height:36px;background:#fff;border:1px solid #E9E8E7;box-sizing:border-box"></div>
<span class="t" style="transform:scaleX(0.9549);left:334.1px;top:275.3px;font-size:18.29px;color:#242424;font-weight:400;">CLIENTI</span>
<svg style="left:2042px;top:278px;" width="18" height="13" viewBox="0 0 18 13"><path d="M2 2 L9 9.5 L16 2" fill="none" stroke="#242424" stroke-width="1.6"/></svg>
<div style="left:0px;top:302px;width:1587px;height:40px;background:#F5F5F5"></div>
<div style="left:44px;top:314px;width:909px;height:28px;background:#DCDAD8"></div>
<svg style="left:18px;top:316px;" width="24" height="24" viewBox="0 0 24 24"><path d="M22 1 V23 H1 Z" fill="#B3B3B3"/></svg>
<div style="left:44px;top:342px;width:1521px;height:815px;background:#fff"></div>
<div style="left:0px;top:342px;width:44px;height:815px;background:#F5F5F5"></div>
<div style="left:0px;top:342px;width:42px;height:397px;background:#DCDAD8"></div>
<div style="left:320px;top:314px;width:1px;height:28px;background:#C8C6C4"></div>
<div style="left:632px;top:314px;width:1px;height:28px;background:#C8C6C4"></div>
<div style="left:953px;top:314px;width:1px;height:28px;background:#C8C6C4"></div>
<div style="left:1049px;top:314px;width:1px;height:28px;background:#D6D6D6"></div>
<div style="left:1145px;top:314px;width:1px;height:28px;background:#D6D6D6"></div>
<div style="left:1241px;top:314px;width:1px;height:28px;background:#D6D6D6"></div>
<div style="left:1337px;top:314px;width:1px;height:28px;background:#D6D6D6"></div>
<div style="left:1433px;top:314px;width:1px;height:28px;background:#D6D6D6"></div>
<div style="left:1529px;top:314px;width:1px;height:28px;background:#D6D6D6"></div>
<div style="left:44px;top:341px;width:1521px;height:1px;background:#C8C6C4"></div>
<div style="left:953px;top:342px;width:612px;height:1px;background:#C8C6C4"></div>
<div style="left:44px;top:302px;width:1px;height:40px;background:#F5F5F5"></div>
<span class="t" style="left:175.0px;top:318.1px;font-size:20.00px;color:#1E7145;font-weight:700;">A</span>
<span class="t" style="left:468.5px;top:318.1px;font-size:20.00px;color:#1E7145;font-weight:700;">B</span>
<span class="t" style="left:785.5px;top:318.1px;font-size:20.00px;color:#1E7145;font-weight:700;">C</span>
<span class="t" style="left:993.5px;top:318.1px;font-size:20.00px;color:#444;font-weight:400;">D</span>
<span class="t" style="left:1090.0px;top:318.1px;font-size:20.00px;color:#444;font-weight:400;">E</span>
<span class="t" style="left:1186.5px;top:318.1px;font-size:20.00px;color:#444;font-weight:400;">F</span>
<span class="t" style="left:1281.0px;top:318.1px;font-size:20.00px;color:#444;font-weight:400;">G</span>
<span class="t" style="left:1378.0px;top:318.1px;font-size:20.00px;color:#444;font-weight:400;">H</span>
<span class="t" style="left:1478.5px;top:318.1px;font-size:20.00px;color:#444;font-weight:400;">I</span>
<div style="left:44px;top:410px;width:1521px;height:1px;background:#E1E1E1"></div>
<div style="left:44px;top:440px;width:1521px;height:1px;background:#E1E1E1"></div>
<div style="left:44px;top:470px;width:1521px;height:1px;background:#E1E1E1"></div>
<div style="left:44px;top:500px;width:1521px;height:1px;background:#E1E1E1"></div>
<div style="left:44px;top:530px;width:1521px;height:1px;background:#E1E1E1"></div>
<div style="left:44px;top:560px;width:1521px;height:1px;background:#E1E1E1"></div>
<div style="left:44px;top:590px;width:1521px;height:1px;background:#E1E1E1"></div>
<div style="left:44px;top:620px;width:1521px;height:1px;background:#E1E1E1"></div>
<div style="left:44px;top:650px;width:1521px;height:1px;background:#E1E1E1"></div>
<div style="left:44px;top:680px;width:1521px;height:1px;background:#E1E1E1"></div>
<div style="left:44px;top:710px;width:1521px;height:1px;background:#E1E1E1"></div>
<div style="left:44px;top:740px;width:1521px;height:1px;background:#E1E1E1"></div>
<div style="left:44px;top:770px;width:1521px;height:1px;background:#E1E1E1"></div>
<div style="left:44px;top:800px;width:1521px;height:1px;background:#E1E1E1"></div>
<div style="left:44px;top:830px;width:1521px;height:1px;background:#E1E1E1"></div>
<div style="left:44px;top:860px;width:1521px;height:1px;background:#E1E1E1"></div>
<div style="left:44px;top:890px;width:1521px;height:1px;background:#E1E1E1"></div>
<div style="left:44px;top:920px;width:1521px;height:1px;background:#E1E1E1"></div>
<div style="left:44px;top:950px;width:1521px;height:1px;background:#E1E1E1"></div>
<div style="left:44px;top:980px;width:1521px;height:1px;background:#E1E1E1"></div>
<div style="left:44px;top:1010px;width:1521px;height:1px;background:#E1E1E1"></div>
<div style="left:44px;top:1040px;width:1521px;height:1px;background:#E1E1E1"></div>
<div style="left:44px;top:1070px;width:1521px;height:1px;background:#E1E1E1"></div>
<div style="left:44px;top:1100px;width:1521px;height:1px;background:#E1E1E1"></div>
<div style="left:44px;top:1130px;width:1521px;height:1px;background:#E1E1E1"></div>
<div style="left:44px;top:1160px;width:1521px;height:1px;background:#E1E1E1"></div>
<div style="left:44px;top:380px;width:1521px;height:1px;background:#E1E1E1"></div>
<div style="left:320px;top:342px;width:1px;height:815px;background:#E1E1E1"></div>
<div style="left:632px;top:342px;width:1px;height:815px;background:#E1E1E1"></div>
<div style="left:953px;top:342px;width:1px;height:815px;background:#E1E1E1"></div>
<div style="left:1049px;top:342px;width:1px;height:815px;background:#E1E1E1"></div>
<div style="left:1145px;top:342px;width:1px;height:815px;background:#E1E1E1"></div>
<div style="left:1241px;top:342px;width:1px;height:815px;background:#E1E1E1"></div>
<div style="left:1337px;top:342px;width:1px;height:815px;background:#E1E1E1"></div>
<div style="left:1433px;top:342px;width:1px;height:815px;background:#E1E1E1"></div>
<div style="left:1529px;top:342px;width:1px;height:815px;background:#E1E1E1"></div>
<div style="left:0px;top:379px;width:42px;height:1px;background:#BDBDBD"></div>
<div style="left:0px;top:380px;width:42px;height:1px;background:#F8F8F8"></div>
<div style="left:0px;top:409px;width:42px;height:1px;background:#BDBDBD"></div>
<div style="left:0px;top:410px;width:42px;height:1px;background:#F8F8F8"></div>
<div style="left:0px;top:439px;width:42px;height:1px;background:#BDBDBD"></div>
<div style="left:0px;top:440px;width:42px;height:1px;background:#F8F8F8"></div>
<div style="left:0px;top:469px;width:42px;height:1px;background:#BDBDBD"></div>
<div style="left:0px;top:470px;width:42px;height:1px;background:#F8F8F8"></div>
<div style="left:0px;top:499px;width:42px;height:1px;background:#BDBDBD"></div>
<div style="left:0px;top:500px;width:42px;height:1px;background:#F8F8F8"></div>
<div style="left:0px;top:529px;width:42px;height:1px;background:#BDBDBD"></div>
<div style="left:0px;top:530px;width:42px;height:1px;background:#F8F8F8"></div>
<div style="left:0px;top:559px;width:42px;height:1px;background:#BDBDBD"></div>
<div style="left:0px;top:560px;width:42px;height:1px;background:#F8F8F8"></div>
<div style="left:0px;top:589px;width:42px;height:1px;background:#BDBDBD"></div>
<div style="left:0px;top:590px;width:42px;height:1px;background:#F8F8F8"></div>
<div style="left:0px;top:619px;width:42px;height:1px;background:#BDBDBD"></div>
<div style="left:0px;top:620px;width:42px;height:1px;background:#F8F8F8"></div>
<div style="left:0px;top:649px;width:42px;height:1px;background:#BDBDBD"></div>
<div style="left:0px;top:650px;width:42px;height:1px;background:#F8F8F8"></div>
<div style="left:0px;top:679px;width:42px;height:1px;background:#BDBDBD"></div>
<div style="left:0px;top:680px;width:42px;height:1px;background:#F8F8F8"></div>
<div style="left:0px;top:709px;width:42px;height:1px;background:#BDBDBD"></div>
<div style="left:0px;top:710px;width:42px;height:1px;background:#F8F8F8"></div>
<div style="left:0px;top:739px;width:42px;height:1px;background:#BDBDBD"></div>
<div style="left:0px;top:740px;width:42px;height:1px;background:#F8F8F8"></div>
<div style="left:0px;top:769px;width:44px;height:1px;background:#E1E1E1"></div>
<div style="left:0px;top:799px;width:44px;height:1px;background:#E1E1E1"></div>
<div style="left:0px;top:829px;width:44px;height:1px;background:#E1E1E1"></div>
<div style="left:0px;top:859px;width:44px;height:1px;background:#E1E1E1"></div>
<div style="left:0px;top:889px;width:44px;height:1px;background:#E1E1E1"></div>
<div style="left:0px;top:919px;width:44px;height:1px;background:#E1E1E1"></div>
<div style="left:0px;top:949px;width:44px;height:1px;background:#E1E1E1"></div>
<div style="left:0px;top:979px;width:44px;height:1px;background:#E1E1E1"></div>
<div style="left:0px;top:1009px;width:44px;height:1px;background:#E1E1E1"></div>
<div style="left:0px;top:1039px;width:44px;height:1px;background:#E1E1E1"></div>
<div style="left:0px;top:1069px;width:44px;height:1px;background:#E1E1E1"></div>
<div style="left:0px;top:1099px;width:44px;height:1px;background:#E1E1E1"></div>
<div style="left:0px;top:1129px;width:44px;height:1px;background:#E1E1E1"></div>
<div style="left:0px;top:1159px;width:44px;height:1px;background:#E1E1E1"></div>
<div style="left:44px;top:342px;width:1px;height:815px;background:#C8C6C4"></div>
<span class="t" style="left:10.5px;top:357.6px;font-size:19.29px;color:#1E7145;font-weight:700;">1</span>
<span class="t" style="left:11.5px;top:387.2px;font-size:19.29px;color:#1E7145;font-weight:700;">2</span>
<span class="t" style="left:11.0px;top:417.2px;font-size:19.29px;color:#1E7145;font-weight:700;">3</span>
<span class="t" style="left:11.0px;top:447.2px;font-size:19.29px;color:#1E7145;font-weight:700;">4</span>
<span class="t" style="left:11.0px;top:477.2px;font-size:19.29px;color:#1E7145;font-weight:700;">5</span>
<span class="t" style="left:11.0px;top:507.2px;font-size:19.29px;color:#1E7145;font-weight:700;">6</span>
<span class="t" style="left:11.5px;top:537.2px;font-size:19.29px;color:#1E7145;font-weight:700;">7</span>
<span class="t" style="left:11.0px;top:567.2px;font-size:19.29px;color:#1E7145;font-weight:700;">8</span>
<span class="t" style="left:11.5px;top:597.2px;font-size:19.29px;color:#1E7145;font-weight:700;">9</span>
<span class="t" style="left:5.6px;top:627.2px;font-size:19.29px;color:#1E7145;font-weight:700;">10</span>
<span class="t" style="left:5.7px;top:657.2px;font-size:19.29px;color:#1E7145;font-weight:700;">11</span>
<span class="t" style="left:5.6px;top:687.2px;font-size:19.29px;color:#1E7145;font-weight:700;">12</span>
<span class="t" style="left:5.1px;top:717.2px;font-size:19.29px;color:#1E7145;font-weight:700;">13</span>
<span class="t" style="left:5.1px;top:747.2px;font-size:19.29px;color:#444;font-weight:400;">14</span>
<span class="t" style="left:5.6px;top:777.2px;font-size:19.29px;color:#444;font-weight:400;">15</span>
<span class="t" style="left:5.6px;top:807.2px;font-size:19.29px;color:#444;font-weight:400;">16</span>
<span class="t" style="left:5.6px;top:837.2px;font-size:19.29px;color:#444;font-weight:400;">17</span>
<span class="t" style="left:5.6px;top:867.2px;font-size:19.29px;color:#444;font-weight:400;">18</span>
<span class="t" style="left:5.6px;top:897.2px;font-size:19.29px;color:#444;font-weight:400;">19</span>
<span class="t" style="left:6.1px;top:927.2px;font-size:19.29px;color:#444;font-weight:400;">20</span>
<span class="t" style="left:6.1px;top:957.2px;font-size:19.29px;color:#444;font-weight:400;">21</span>
<span class="t" style="left:6.1px;top:987.2px;font-size:19.29px;color:#444;font-weight:400;">22</span>
<span class="t" style="left:6.1px;top:1017.2px;font-size:19.29px;color:#444;font-weight:400;">23</span>
<span class="t" style="left:5.6px;top:1047.2px;font-size:19.29px;color:#444;font-weight:400;">24</span>
<span class="t" style="left:6.1px;top:1077.2px;font-size:19.29px;color:#444;font-weight:400;">25</span>
<span class="t" style="left:6.1px;top:1107.2px;font-size:19.29px;color:#444;font-weight:400;">26</span>
<span class="t" style="left:6.1px;top:1137.2px;font-size:19.29px;color:#444;font-weight:400;">27</span>
<div style="left:46px;top:344px;width:906px;height:35px;background:#2E4E8E"></div>
<div style="left:46px;top:379px;width:906px;height:2px;background:#7A8DB8"></div>
<div style="left:46px;top:381px;width:906px;height:28px;background:#3A5C9C"></div>
<div style="left:46px;top:409px;width:906px;height:2px;background:#6E89BD"></div>
<div style="left:46px;top:411px;width:906px;height:28px;background:#ACB1C0"></div>
<div style="left:46px;top:439px;width:906px;height:2px;background:#6E89BD"></div>
<div style="left:46px;top:441px;width:906px;height:28px;background:#C8C8C8"></div>
<div style="left:320px;top:441px;width:1px;height:28px;background:#B4B4B4"></div>
<div style="left:632px;top:441px;width:1px;height:28px;background:#B4B4B4"></div>
<div style="left:46px;top:469px;width:906px;height:2px;background:#6E89BD"></div>
<div style="left:46px;top:471px;width:906px;height:28px;background:#ACB1C0"></div>
<div style="left:46px;top:499px;width:906px;height:2px;background:#6E89BD"></div>
<div style="left:46px;top:501px;width:906px;height:28px;background:#C8C8C8"></div>
<div style="left:320px;top:501px;width:1px;height:28px;background:#B4B4B4"></div>
<div style="left:632px;top:501px;width:1px;height:28px;background:#B4B4B4"></div>
<div style="left:46px;top:529px;width:906px;height:2px;background:#6E89BD"></div>
<div style="left:46px;top:531px;width:906px;height:28px;background:#ACB1C0"></div>
<div style="left:46px;top:559px;width:906px;height:2px;background:#6E89BD"></div>
<div style="left:46px;top:561px;width:906px;height:28px;background:#C8C8C8"></div>
<div style="left:320px;top:561px;width:1px;height:28px;background:#B4B4B4"></div>
<div style="left:632px;top:561px;width:1px;height:28px;background:#B4B4B4"></div>
<div style="left:46px;top:589px;width:906px;height:2px;background:#6E89BD"></div>
<div style="left:46px;top:591px;width:906px;height:28px;background:#ACB1C0"></div>
<div style="left:46px;top:619px;width:906px;height:2px;background:#6E89BD"></div>
<div style="left:46px;top:621px;width:906px;height:28px;background:#C8C8C8"></div>
<div style="left:320px;top:621px;width:1px;height:28px;background:#B4B4B4"></div>
<div style="left:632px;top:621px;width:1px;height:28px;background:#B4B4B4"></div>
<div style="left:46px;top:649px;width:906px;height:2px;background:#6E89BD"></div>
<div style="left:46px;top:651px;width:906px;height:28px;background:#ACB1C0"></div>
<div style="left:46px;top:679px;width:906px;height:2px;background:#6E89BD"></div>
<div style="left:46px;top:681px;width:906px;height:28px;background:#C8C8C8"></div>
<div style="left:320px;top:681px;width:1px;height:28px;background:#B4B4B4"></div>
<div style="left:632px;top:681px;width:1px;height:28px;background:#B4B4B4"></div>
<div style="left:46px;top:709px;width:906px;height:2px;background:#6E89BD"></div>
<div style="left:46px;top:711px;width:906px;height:28px;background:#ACB1C0"></div>
<span class="t" style="transform:scaleX(0.8831);left:451.6px;top:348.5px;font-size:28.00px;color:#fff;font-weight:700;">CLIENTI</span>
<span class="t" style="transform:scaleX(0.8290);left:146.4px;top:384.9px;font-size:22.86px;color:#D2D0D0;font-weight:700;">CODICE</span>
<span class="t" style="transform:scaleX(0.8646);left:384.6px;top:384.9px;font-size:22.86px;color:#D2D0D0;font-weight:700;">NOME E COGNOME</span>
<span class="t" style="transform:scaleX(0.8392);left:774.7px;top:385.1px;font-size:22.86px;color:#D2D0D0;font-weight:700;">ETÀ</span>
<div style="left:293px;top:384px;width:24px;height:24px;background:#C8C8C8;border:1px solid #6F6F6F;border-radius:3px;box-sizing:border-box"></div>
<svg style="left:299px;top:392px;" width="12" height="8" viewBox="0 0 12 8"><path d="M1 1.5 L6 6.5 L11 1.5" fill="none" stroke="#222" stroke-width="1.4"/></svg>
<div style="left:605px;top:384px;width:24px;height:24px;background:#C8C8C8;border:1px solid #6F6F6F;border-radius:3px;box-sizing:border-box"></div>
<svg style="left:611px;top:392px;" width="12" height="8" viewBox="0 0 12 8"><path d="M1 1.5 L6 6.5 L11 1.5" fill="none" stroke="#222" stroke-width="1.4"/></svg>
<div style="left:926px;top:384px;width:24px;height:24px;background:#C8C8C8;border:1px solid #6F6F6F;border-radius:3px;box-sizing:border-box"></div>
<svg style="left:932px;top:392px;" width="12" height="8" viewBox="0 0 12 8"><path d="M1 1.5 L6 6.5 L11 1.5" fill="none" stroke="#222" stroke-width="1.4"/></svg>
<span class="t" style="transform:scaleX(0.9351);left:48.5px;top:417.2px;font-size:19.29px;color:#000;font-weight:400;">C13</span>
<span class="t" style="transform:scaleX(1.0057);left:324.0px;top:417.2px;font-size:19.29px;color:#000;font-weight:400;">Alessandro Croce</span>
<span class="t" style="transform:scaleX(1.0134);left:927.9px;top:417.2px;font-size:19.29px;color:#000;font-weight:400;">20</span>
<span class="t" style="transform:scaleX(0.9351);left:48.5px;top:447.2px;font-size:19.29px;color:#000;font-weight:400;">C46</span>
<span class="t" style="transform:scaleX(0.9911);left:323.0px;top:447.2px;font-size:19.29px;color:#000;font-weight:400;">Luigi Saccani</span>
<span class="t" style="transform:scaleX(1.0134);left:927.9px;top:447.2px;font-size:19.29px;color:#000;font-weight:400;">25</span>
<span class="t" style="transform:scaleX(0.9351);left:48.5px;top:477.2px;font-size:19.29px;color:#000;font-weight:400;">C79</span>
<span class="t" style="transform:scaleX(1.0716);left:324.0px;top:477.2px;font-size:19.29px;color:#000;font-weight:400;">Sofia Bertolotti</span>
<span class="t" style="transform:scaleX(1.0134);left:927.9px;top:477.2px;font-size:19.29px;color:#000;font-weight:400;">28</span>
<span class="t" style="transform:scaleX(0.9351);left:48.5px;top:507.2px;font-size:19.29px;color:#000;font-weight:400;">C51</span>
<span class="t" style="transform:scaleX(1.0133);left:323.0px;top:507.2px;font-size:19.29px;color:#000;font-weight:400;">Beatrice Tenca</span>
<span class="t" style="transform:scaleX(1.0134);left:927.9px;top:507.2px;font-size:19.29px;color:#000;font-weight:400;">29</span>
<span class="t" style="transform:scaleX(0.9351);left:48.5px;top:537.2px;font-size:19.29px;color:#000;font-weight:400;">C27</span>
<span class="t" style="left:324.0px;top:537.2px;font-size:19.29px;color:#000;font-weight:400;">Sara Brambilla</span>
<span class="t" style="transform:scaleX(1.0134);left:927.9px;top:537.2px;font-size:19.29px;color:#000;font-weight:400;">31</span>
<span class="t" style="transform:scaleX(0.9351);left:48.5px;top:567.2px;font-size:19.29px;color:#000;font-weight:400;">C96</span>
<span class="t" style="transform:scaleX(1.0439);left:323.0px;top:567.2px;font-size:19.29px;color:#000;font-weight:400;">Riccardo Giorgetti</span>
<span class="t" style="transform:scaleX(1.0134);left:927.9px;top:567.2px;font-size:19.29px;color:#000;font-weight:400;">33</span>
<span class="t" style="transform:scaleX(0.9351);left:48.5px;top:597.2px;font-size:19.29px;color:#000;font-weight:400;">C13</span>
<span class="t" style="transform:scaleX(1.0057);left:324.0px;top:597.2px;font-size:19.29px;color:#000;font-weight:400;">Alessandro Croce</span>
<span class="t" style="transform:scaleX(1.0134);left:927.9px;top:597.2px;font-size:19.29px;color:#000;font-weight:400;">20</span>
<span class="t" style="transform:scaleX(0.9351);left:48.5px;top:627.2px;font-size:19.29px;color:#000;font-weight:400;">C33</span>
<span class="t" style="transform:scaleX(1.0387);left:324.0px;top:627.2px;font-size:19.29px;color:#000;font-weight:400;">Simona Arconati</span>
<span class="t" style="transform:scaleX(1.0134);left:927.9px;top:627.2px;font-size:19.29px;color:#000;font-weight:400;">27</span>
<span class="t" style="transform:scaleX(0.9351);left:48.5px;top:657.2px;font-size:19.29px;color:#000;font-weight:400;">C88</span>
<span class="t" style="transform:scaleX(1.0454);left:323.0px;top:657.2px;font-size:19.29px;color:#000;font-weight:400;">Francesco Moriani</span>
<span class="t" style="transform:scaleX(1.0134);left:927.9px;top:657.2px;font-size:19.29px;color:#000;font-weight:400;">39</span>
<span class="t" style="transform:scaleX(0.9351);left:48.5px;top:687.2px;font-size:19.29px;color:#000;font-weight:400;">C73</span>
<span class="t" style="transform:scaleX(0.9614);left:324.0px;top:687.2px;font-size:19.29px;color:#000;font-weight:400;">Claudio Sessa</span>
<span class="t" style="transform:scaleX(1.0134);left:927.9px;top:687.2px;font-size:19.29px;color:#000;font-weight:400;">46</span>
<span class="t" style="transform:scaleX(0.9351);left:48.5px;top:717.2px;font-size:19.29px;color:#000;font-weight:400;">C49</span>
<span class="t" style="transform:scaleX(1.0378);left:324.0px;top:717.2px;font-size:19.29px;color:#000;font-weight:400;">Arianna Muccia</span>
<span class="t" style="transform:scaleX(1.0134);left:927.9px;top:717.2px;font-size:19.29px;color:#000;font-weight:400;">48</span>
<div style="left:42px;top:340px;width:914px;height:402px;border:3px solid #1D6F42;box-sizing:border-box"></div>
<div style="left:45px;top:343px;width:908px;height:396px;border:1px solid #fff;box-sizing:border-box"></div>
<div style="left:945px;top:731px;width:8px;height:8px;background:#0F3A6B;clip-path:polygon(70% 0,100% 0,100% 100%,0 100%,0 70%,70% 70%)"></div>
<div style="left:952px;top:738px;width:6px;height:6px;background:#1D6F42"></div>
<div style="left:1565px;top:342px;width:22px;height:815px;background:#E6E6E6"></div>
<div style="left:1565px;top:343px;width:22px;height:23px;background:#fff;border:1px solid #C8C8C8;box-sizing:border-box"></div>
<svg style="left:1570px;top:350px;" width="12" height="8" viewBox="0 0 12 8"><path d="M0.5 7 L6 1 L11.5 7 Z" fill="#777"/></svg>
<div style="left:1565px;top:366px;width:22px;height:370px;background:#fff;border:1px solid #C8C8C8;box-sizing:border-box"></div>
<div style="left:1565px;top:1135px;width:22px;height:22px;background:#fff;border:1px solid #C8C8C8;box-sizing:border-box"></div>
<svg style="left:1570px;top:1142px;" width="12" height="8" viewBox="0 0 12 8"><path d="M0.5 1 L6 7 L11.5 1 Z" fill="#777"/></svg>
<div style="left:0px;top:1157px;width:1587px;height:70px;background:#F4F4F4"></div>
<div style="left:45px;top:1157px;width:1520px;height:22px;background:#E6E6E6"></div>
<div style="left:45px;top:1157px;width:23px;height:22px;background:#fff;border:1px solid #C8C8C8;box-sizing:border-box"></div>
<svg style="left:51px;top:1162px;" width="8" height="12" viewBox="0 0 8 12"><path d="M7 0.5 L1 6 L7 11.5 Z" fill="#777"/></svg>
<div style="left:67px;top:1157px;width:352px;height:22px;background:#fff;border:1px solid #C8C8C8;box-sizing:border-box"></div>
<div style="left:1542px;top:1157px;width:23px;height:22px;background:#fff;border:1px solid #C8C8C8;box-sizing:border-box"></div>
<svg style="left:1550px;top:1162px;" width="8" height="12" viewBox="0 0 8 12"><path d="M1 0.5 L7 6 L1 11.5 Z" fill="#777"/></svg>
<svg style="left:6px;top:1194px;" width="14" height="17" viewBox="0 0 14 17"><path d="M11 1.5 L3 8.5 L11 15.5" fill="none" stroke="#C8C6C4" stroke-width="1.5"/></svg>
<svg style="left:55px;top:1194px;" width="14" height="17" viewBox="0 0 14 17"><path d="M3 1.5 L11 8.5 L3 15.5" fill="none" stroke="#A19F9D" stroke-width="1.5"/></svg>
<svg style="left:100px;top:1194px;" width="20" height="16" viewBox="0 0 20 16"><path d="M1 2 H19 M1 8 H19 M1 14 H19" stroke="#323130" stroke-width="1.6"/></svg>
<span class="t" style="transform:scaleX(0.9542);left:150.2px;top:1192.4px;font-size:21.71px;color:#242424;font-weight:400;-webkit-text-stroke:0.69px #242424;">Foglio1</span>
<div style="left:148px;top:1223px;width:73px;height:4px;background:#1D6F42"></div>
<svg style="left:248px;top:1193px;" width="20" height="20" viewBox="0 0 20 20"><path d="M10 1 V19 M1 10 H19" stroke="#323130" stroke-width="1.6"/></svg>
<div style="left:0px;top:1227px;width:2068px;height:30px;background:#fff"></div>
<div style="left:0px;top:1227px;width:2068px;height:1px;background:#E1DFDD"></div>
<span class="t" style="transform:scaleX(0.9435);left:10.3px;top:1237.4px;font-size:19.43px;color:#242424;font-weight:400;">Modalità di calcolo: Automatico</span>
<span class="t" style="transform:scaleX(0.9159);left:289.1px;top:1237.4px;font-size:19.43px;color:#242424;font-weight:400;">Statistiche cartella di lavoro</span>
<span class="t" style="transform:scaleX(0.9036);left:1172.7px;top:1237.7px;font-size:19.43px;color:#242424;font-weight:400;">Media: 31,45454545</span>
<span class="t" style="transform:scaleX(0.9322);left:1352.1px;top:1237.7px;font-size:19.43px;color:#242424;font-weight:400;">Conteggio: 37</span>
<span class="t" style="transform:scaleX(0.9002);left:1484.3px;top:1237.7px;font-size:19.43px;color:#242424;font-weight:400;">Somma: 346</span>
<svg style="left:1603px;top:1242px;" width="10" height="8" viewBox="0 0 10 8"><path d="M1 1.5 L5.0 5.5 L9 1.5" fill="none" stroke="#605E5C" stroke-width="1.5"/></svg>
<span class="t" style="transform:scaleX(0.9218);left:1674.1px;top:1237.7px;font-size:19.43px;color:#242424;font-weight:400;">Invia feedback a Microsoft</span>
<div style="left:1939px;top:1245px;width:17px;height:1.6px;background:#323130"></div>
<span class="t" style="transform:scaleX(0.8698);left:1973.1px;top:1237.7px;font-size:19.43px;color:#242424;font-weight:400;">100%</span>
<svg style="left:2032px;top:1237px;" width="18" height="18" viewBox="0 0 18 18"><path d="M9 0 V18 M0 9 H18" stroke="#323130" stroke-width="1.6"/></svg>
<div style="left:1588px;top:308px;width:480px;height:919px;background:#EDEBE9"></div>
<div style="left:1587px;top:308px;width:1px;height:919px;background:#D2D0CE"></div>
<span class="t" style="transform:scaleX(1.0416);left:1612.1px;top:338.8px;font-size:23.71px;color:#201F1E;font-weight:400;-webkit-text-stroke:0.76px #201F1E;">Formattazione condizionale</span>
<svg style="left:2018px;top:339px;" width="20" height="20" viewBox="0 0 20 20"><path d="M2 2 L18 18 M18 2 L2 18" stroke="#323130" stroke-width="1.7"/></svg>
<span class="t" style="transform:scaleX(0.9509);left:1617.4px;top:397.3px;font-size:18.14px;color:#1E7145;font-weight:400;">Vai a Gestisci regole</span>
<span class="t" style="transform:scaleX(1.0572);left:1614.3px;top:443.2px;font-size:17.86px;color:#201F1E;font-weight:400;-webkit-text-stroke:0.57px #201F1E;">Applica all'intervallo</span>
<div style="left:1614px;top:466px;width:430px;height:42px;background:#fff;border:1px solid #605E5C;border-radius:3px;box-sizing:border-box"></div>
<span class="t" style="transform:scaleX(0.9122);left:1633.3px;top:479.4px;font-size:17.86px;color:#242424;font-weight:400;">A1:C13</span>
<svg style="left:1995px;top:465px;" width="48" height="42" viewBox="0 0 48 42"><rect x="13.3" y="12.3" width="25.2" height="19.4" fill="#FAFAFA" stroke="#3B3A39" stroke-width="1.2"/><path d="M13.3 18.5 H38.5 M13.3 25.2 H38.5 M21.4 12.3 V31.7 M30.4 12.3 V31.7" stroke="#5F5E5C" stroke-width="1"/><rect x="21.6" y="18.6" width="16.8" height="13" fill="#7DB8E8" stroke="#1A6FC0" stroke-width="0.9"/><path d="M30.5 31.5 C29.5 30 28 27 28.2 25.6 C28.4 24 30.3 24.2 30.8 25.6 L32.5 29.5 L33 27.8 C33.6 26.9 35 27 35.3 28 C35.9 27.4 37.2 27.6 37.4 28.6 C38 28.2 39.3 28.5 39.6 29.6 C40.5 32 40.8 34.5 39.5 35.6 C37.8 37 34 37 32.4 35.8 Z" fill="#fff" stroke="#323130" stroke-width="1.1" stroke-linejoin="round"/></svg>
<div style="left:1620px;top:516px;width:24px;height:24px;border:1.5px solid #323130;box-sizing:border-box;background:transparent"></div>
<span class="t" style="transform:scaleX(0.9369);left:1655.7px;top:521.1px;font-size:18.14px;color:#242424;font-weight:400;">Se true, arresta</span>
<svg style="left:1783px;top:519px;" width="24" height="24" viewBox="0 0 24 24"><circle cx="12" cy="12" r="10.5" fill="none" stroke="#0F6CBD" stroke-width="1.5"/><circle cx="12" cy="7" r="1.5" fill="#0F6CBD"/><path d="M12 10.5 V18" stroke="#0F6CBD" stroke-width="2.2"/></svg>
<span class="t" style="transform:scaleX(1.0445);left:1617.2px;top:570.6px;font-size:17.86px;color:#201F1E;font-weight:400;-webkit-text-stroke:0.57px #201F1E;">Tipo di regola</span>
<div style="left:1617px;top:593px;width:427px;height:42px;background:#fff;border:1px solid #8A8886;border-radius:3px;box-sizing:border-box"></div>
<svg style="left:1630px;top:600px;" width="38" height="34" viewBox="0 0 38 34"><rect x="2" y="2" width="31" height="24" fill="#fff" stroke="#605E5C" stroke-width="1.3"/><path d="M2 9 H33 M2 17 H33 M10 2 V26 M26 2 V26" stroke="#605E5C" stroke-width="1.3"/><rect x="10.5" y="9.5" width="15" height="7.5" fill="#FADF94" stroke="#E8821E" stroke-width="1.3"/><rect x="16" y="17" width="18" height="15" fill="#fff" stroke="#323130" stroke-width="1.3"/><path d="M28 21 L21 23.5 L28 26 M21 28 H28" fill="none" stroke="#323130" stroke-width="1.2"/></svg>
<span class="t" style="transform:scaleX(0.9616);left:1680.3px;top:605.1px;font-size:18.14px;color:#242424;font-weight:400;">Evidenzia celle con</span>
<svg style="left:2014px;top:608px;" width="17" height="12" viewBox="0 0 17 12"><path d="M1.5 2 L8.5 9.5 L15.5 2" fill="none" stroke="#323130" stroke-width="1.6"/></svg>
<div style="left:1617px;top:641px;width:427px;height:42px;background:#fff;border:1px solid #8A8886;border-radius:3px;box-sizing:border-box"></div>
<span class="t" style="transform:scaleX(1.0130);left:1631.4px;top:652.9px;font-size:18.14px;color:#242424;font-weight:400;">Valori duplicati</span>
<svg style="left:2014px;top:656px;" width="17" height="12" viewBox="0 0 17 12"><path d="M1.5 2 L8.5 9.5 L15.5 2" fill="none" stroke="#323130" stroke-width="1.6"/></svg>
<span class="t" style="transform:scaleX(1.0447);left:1616.2px;top:715.7px;font-size:17.86px;color:#201F1E;font-weight:400;-webkit-text-stroke:0.57px #201F1E;">Formatta con</span>
<div style="left:1605px;top:731px;width:452px;height:60px;border:4px solid #FF0000;box-sizing:border-box"></div>
<div style="left:1617px;top:738px;width:427px;height:42px;background:#fff;border:1px solid #8A8886;border-radius:3px;box-sizing:border-box"></div>
<div style="left:1630px;top:745px;width:110px;height:26px;background:#FFC7CE"></div>
<span class="t" style="transform:scaleX(0.9198);left:1654.0px;top:750.8px;font-size:18.14px;color:#9C0006;font-weight:400;">AaBbCc</span>
<span class="t" style="transform:scaleX(0.9823);left:1754.3px;top:750.2px;font-size:18.14px;color:#242424;font-weight:400;">Riempimento rosso chiaro co...</span>
<svg style="left:2014px;top:753px;" width="17" height="12" viewBox="0 0 17 12"><path d="M1.5 2 L8.5 9.5 L15.5 2" fill="none" stroke="#323130" stroke-width="1.6"/></svg>
<span class="t" style="transform:scaleX(0.9765);left:1628.4px;top:809.1px;font-size:22.86px;color:#323130;font-weight:700;">G</span>
<span class="t" style="transform:scaleX(0.9733);left:1664.2px;top:809.1px;font-size:22.86px;color:#323130;font-weight:400;">C</span>
<span class="t" style="left:1703.5px;top:809.1px;font-size:22.86px;color:#323130;font-weight:400;">S</span>
<div style="left:1703px;top:830px;width:17px;height:1.5px;background:#323130"></div>
<span class="t" style="left:1740.0px;top:809.1px;font-size:22.86px;color:#323130;font-weight:400;">D</span>
<div style="left:1738px;top:830px;width:21px;height:1.3px;background:#323130"></div>
<div style="left:1738px;top:833.5px;width:21px;height:1.3px;background:#323130"></div>
<span class="t" style="transform:scaleX(1.1809);left:1774.0px;top:812.7px;font-size:18.57px;color:#323130;font-weight:400;">ab</span>
<div style="left:1772px;top:821px;width:28px;height:1.5px;background:#323130"></div>
<svg style="left:1810px;top:805px;" width="32" height="32" viewBox="0 0 32 32"><path d="M5.7 13.8 L12.8 20.9 L20.9 13.3 L16.4 9.4 M5.7 13.8 L13.9 6.3" fill="#FAFAFA" stroke="#323130" stroke-width="1.5" stroke-linejoin="round"/><path d="M13.9 8 V3.2 C13.9 1.6 16.4 1.6 16.4 3.2 V10.5" fill="none" stroke="#323130" stroke-width="1.5"/><path d="M19.3 9.6 C22.4 7.4 25.2 9.5 24.2 19.6" fill="none" stroke="#0F6CBD" stroke-width="2.1"/><rect x="2" y="22" width="27" height="7" fill="#FFC7CE"/></svg>
<svg style="left:1850px;top:818px;" width="12" height="9" viewBox="0 0 12 9"><path d="M1 1.5 L6.0 6.5 L11 1.5" fill="none" stroke="#605E5C" stroke-width="1.4"/></svg>
<svg style="left:1876px;top:805px;" width="32" height="32" viewBox="0 0 32 32"><path d="M8.2 20.4 L15.4 3.6 L22.4 20.4 M10.5 15 H20.3" fill="none" stroke="#323130" stroke-width="1.6"/><rect x="2" y="22" width="27" height="7" fill="#9C0006"/></svg>
<svg style="left:1916px;top:818px;" width="12" height="9" viewBox="0 0 12 9"><path d="M1 1.5 L6.0 6.5 L11 1.5" fill="none" stroke="#605E5C" stroke-width="1.4"/></svg>
<svg style="left:1946px;top:805px;" width="30" height="30" viewBox="0 0 30 30"><rect x="2.2" y="2.6" width="1.9" height="1.9" fill="#3B3A39"/><rect x="2.2" y="5.8" width="1.9" height="1.9" fill="#3B3A39"/><rect x="2.2" y="8.9" width="1.9" height="1.9" fill="#3B3A39"/><rect x="2.2" y="12.0" width="1.9" height="1.9" fill="#3B3A39"/><rect x="2.2" y="15.2" width="1.9" height="1.9" fill="#3B3A39"/><rect x="2.2" y="18.4" width="1.9" height="1.9" fill="#3B3A39"/><rect x="2.2" y="21.5" width="1.9" height="1.9" fill="#3B3A39"/><rect x="2.2" y="24.7" width="1.9" height="1.9" fill="#3B3A39"/><rect x="2.2" y="27.8" width="1.9" height="1.9" fill="#3B3A39"/><rect x="5.4" y="2.6" width="1.9" height="1.9" fill="#3B3A39"/><rect x="5.4" y="15.2" width="1.9" height="1.9" fill="#3B3A39"/><rect x="5.4" y="27.8" width="1.9" height="1.9" fill="#3B3A39"/><rect x="8.6" y="2.6" width="1.9" height="1.9" fill="#3B3A39"/><rect x="8.6" y="15.2" width="1.9" height="1.9" fill="#3B3A39"/><rect x="8.6" y="27.8" width="1.9" height="1.9" fill="#3B3A39"/><rect x="11.8" y="2.6" width="1.9" height="1.9" fill="#3B3A39"/><rect x="11.8" y="15.2" width="1.9" height="1.9" fill="#3B3A39"/><rect x="11.8" y="27.8" width="1.9" height="1.9" fill="#3B3A39"/><rect x="15.0" y="2.6" width="1.9" height="1.9" fill="#3B3A39"/><rect x="15.0" y="5.8" width="1.9" height="1.9" fill="#3B3A39"/><rect x="15.0" y="8.9" width="1.9" height="1.9" fill="#3B3A39"/><rect x="15.0" y="12.0" width="1.9" height="1.9" fill="#3B3A39"/><rect x="15.0" y="15.2" width="1.9" height="1.9" fill="#3B3A39"/><rect x="15.0" y="18.4" width="1.9" height="1.9" fill="#3B3A39"/><rect x="15.0" y="21.5" width="1.9" height="1.9" fill="#3B3A39"/><rect x="15.0" y="24.7" width="1.9" height="1.9" fill="#3B3A39"/><rect x="15.0" y="27.8" width="1.9" height="1.9" fill="#3B3A39"/><rect x="18.2" y="2.6" width="1.9" height="1.9" fill="#3B3A39"/><rect x="18.2" y="15.2" width="1.9" height="1.9" fill="#3B3A39"/><rect x="18.2" y="27.8" width="1.9" height="1.9" fill="#3B3A39"/><rect x="21.4" y="2.6" width="1.9" height="1.9" fill="#3B3A39"/><rect x="21.4" y="15.2" width="1.9" height="1.9" fill="#3B3A39"/><rect x="21.4" y="27.8" width="1.9" height="1.9" fill="#3B3A39"/><rect x="24.6" y="2.6" width="1.9" height="1.9" fill="#3B3A39"/><rect x="24.6" y="15.2" width="1.9" height="1.9" fill="#3B3A39"/><rect x="24.6" y="27.8" width="1.9" height="1.9" fill="#3B3A39"/><rect x="27.8" y="2.6" width="1.9" height="1.9" fill="#3B3A39"/><rect x="27.8" y="5.8" width="1.9" height="1.9" fill="#3B3A39"/><rect x="27.8" y="8.9" width="1.9" height="1.9" fill="#3B3A39"/><rect x="27.8" y="12.0" width="1.9" height="1.9" fill="#3B3A39"/><rect x="27.8" y="15.2" width="1.9" height="1.9" fill="#3B3A39"/><rect x="27.8" y="18.4" width="1.9" height="1.9" fill="#3B3A39"/><rect x="27.8" y="21.5" width="1.9" height="1.9" fill="#3B3A39"/><rect x="27.8" y="24.7" width="1.9" height="1.9" fill="#3B3A39"/><rect x="27.8" y="27.8" width="1.9" height="1.9" fill="#3B3A39"/></svg>
<svg style="left:1988px;top:818px;" width="12" height="9" viewBox="0 0 12 9"><path d="M1 1.5 L6.0 6.5 L11 1.5" fill="none" stroke="#605E5C" stroke-width="1.4"/></svg>
<div style="left:1617px;top:861px;width:429px;height:52px;background:#FFC7CE;border:1px solid #D6CFD0;box-sizing:border-box"></div>
<span class="t" style="transform:scaleX(1.0177);left:1781.0px;top:874.9px;font-size:27.14px;color:#9C0006;font-weight:400;">AaBbCc</span>
<div style="left:1788px;top:1164px;width:120px;height:41px;background:#217346;border-radius:3px"></div>
<span class="t" style="transform:scaleX(1.0054);left:1826.3px;top:1177.1px;font-size:18.57px;color:#fff;font-weight:400;-webkit-text-stroke:0.59px #fff;">Fatto</span>
<div style="left:1920px;top:1164px;width:124px;height:41px;background:#fff;border:1px solid #8A8886;border-radius:3px;box-sizing:border-box"></div>
<span class="t" style="transform:scaleX(0.9952);left:1950.5px;top:1177.1px;font-size:18.57px;color:#201F1E;font-weight:400;-webkit-text-stroke:0.59px #201F1E;">Annulla</span>
<div style="left:2068px;top:0px;width:1px;height:1257px;background:#C8C6C4"></div>
</body></html>
